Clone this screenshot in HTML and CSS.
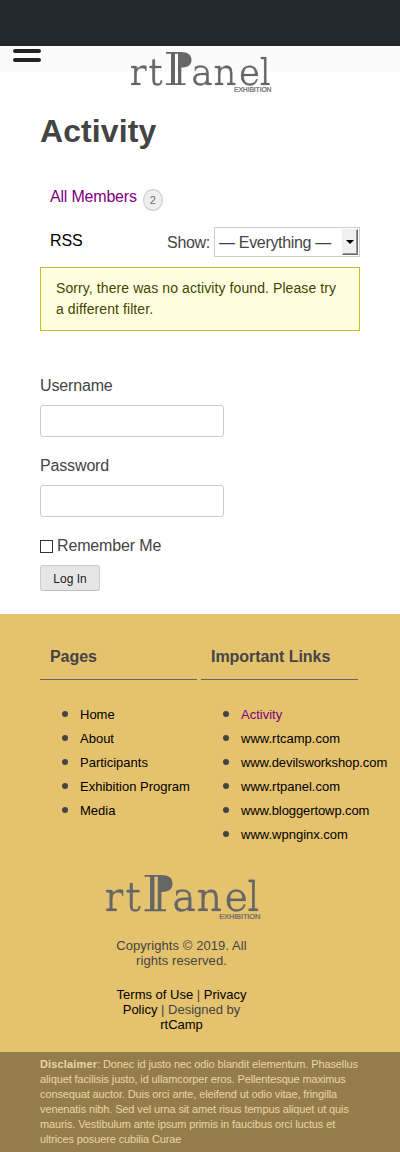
FILE: index.html
```html
<!DOCTYPE html>
<html lang="en">
<head>
<meta charset="utf-8">
<title>Activity | rtPanel Exhibition</title>
<link rel="stylesheet" href="styles.css">
</head>
<body>
<div class="adminbar"></div>
<header class="header">
  <svg class="menu" viewBox="0 0 28 14"><path d="M2 2H26M2 11H26"/></svg>
  <svg class="logo" viewBox="0 0 142 41">
    <defs>
      <mask id="thin" maskUnits="userSpaceOnUse" x="-4" y="-2" width="150" height="46">
        <text class="thin" x="0 18.800 61.700 83.700 109.200 129.900" y="32.700">rtanel</text>
      </mask>
    </defs>
    <text class="word" mask="url(#thin)" x="-1.400 17.400 60.300 82.300 107.800 128.500" y="32.700">rtanel</text>
    <path class="mark" d="M36 0H51C58 0 61.5 3 61.5 8S58 15.500 51.300 15.500V31.300H55.500V33H36V31.300H41V1.700H36ZM45 1.700V31.300H48V1.700Z" fill-rule="evenodd"/>
    <text class="sub" x="104" y="40.300" textLength="37.500">EXHIBITION</text>
  </svg>
</header>
<main class="main">
  <h1>Activity</h1>
  <div class="tabs"><a class="visited" href="#">All Members</a><span class="count">2</span></div>
  <div class="filter">
    <a href="#">RSS</a>
    <span class="show">Show:</span>
    <div class="select"><span>— Everything —</span><i class="arrow"></i></div>
  </div>
  <div class="notice">Sorry, there was no activity found. Please try<br>a different filter.</div>
  <form class="login">
    <label>Username</label><input class="field" type="text">
    <label>Password</label><input class="field" type="password">
    <div class="remember"><i class="check"></i><span>Remember Me</span></div>
    <button type="button">Log In</button>
  </form>
</main>
<footer class="footer">
  <div class="widgets">
    <section><h2>Pages</h2>
      <ul><li><a href="#">Home</a></li><li><a href="#">About</a></li><li><a href="#">Participants</a></li><li><a href="#">Exhibition Program</a></li><li><a href="#">Media</a></li></ul>
    </section>
    <section><h2>Important Links</h2>
      <ul><li><a class="visited" href="#">Activity</a></li><li><a href="#">www.rtcamp.com</a></li><li><a class="tight" href="#">www.devilsworkshop.com</a></li><li><a href="#">www.rtpanel.com</a></li><li><a class="tight" href="#">www.bloggertowp.com</a></li><li><a href="#">www.wpnginx.com</a></li></ul>
    </section>
  </div>
  <svg class="logo logo-footer" viewBox="0 0 142 41">
    <text class="word" mask="url(#thin)" x="-1.400 17.400 60.300 82.300 107.800 128.500" y="32.700">rtanel</text>
    <path class="mark" d="M36 0H51C58 0 61.5 3 61.5 8S58 15.500 51.300 15.500V31.300H55.500V33H36V31.300H41V1.700H36ZM45 1.700V31.300H48V1.700Z" fill-rule="evenodd"/>
    <text class="sub" x="104" y="40.300" textLength="37.500">EXHIBITION</text>
  </svg>
  <p class="copy">Copyrights © 2019. All<br>rights reserved.</p>
  <p class="copy terms"><a href="#">Terms of Use</a> | <a href="#">Privacy<br>Policy</a> | Designed by<br><a href="#">rtCamp</a></p>
</footer>
<div class="disclaimer"><b>Disclaimer</b>: Donec id justo nec odio blandit elementum. Phasellus<br>aliquet facilisis justo, id ullamcorper eros. Pellentesque maximus<br>consequat auctor. Duis orci ante, eleifend ut odio vitae, fringilla<br>venenatis nibh. Sed vel urna sit amet risus tempus aliquet ut quis<br>mauris. Vestibulum ante ipsum primis in faucibus orci luctus et<br>ultrices posuere cubilia Curae</div>
</body>
</html>
```
FILE: styles.css
```css
* { box-sizing: border-box; }
body { margin: 0; background: #fff; color: #444; font: 16px/24px "Liberation Sans", Arial, sans-serif; white-space: nowrap; }
a { color: #000; text-decoration: none; }
a.visited { color: #800080; }
h1, h2, p, ul { margin: 0; padding: 0; }
.adminbar { height: 46px; background: #23282d; }
.header { height: 26px; background: #fbfbfb; display: flex; align-items: flex-start; }
.menu { width: 28px; height: 14px; margin: 3px 0 0 13px; fill: none; stroke: #222; stroke-width: 4; stroke-linecap: round; }
.logo { display: block; width: 142px; height: 41px; margin: 6px 0 0 89px; overflow: visible; }
.word { font: 37px "DejaVu Serif", serif; fill: #666; stroke: #666; stroke-width: .6; }
.thin { font: 37px "DejaVu Serif", serif; fill: #fff; stroke: #fff; stroke-width: .6; }
.mark { fill: #666; }
.sub { font: 6.800px "Liberation Sans", Arial, sans-serif; fill: #666; stroke: #666; stroke-width: .2; }
.main { height: 542px; padding: 35px 40px 0; }
h1 { font-size: 32px; line-height: 48px; letter-spacing: .1px; }
.tabs { display: flex; height: 44px; margin-top: 30px; padding-left: 10px; letter-spacing: -.2px; }
.count { width: 20px; height: 22px; margin: 4px 0 0 6px; border: 1px solid #ccc; border-radius: 50%; background: #eee; color: #6c6c6c; font-size: 11px; line-height: 21px; text-align: center; }
.filter { display: flex; height: 38px; padding-left: 10px; letter-spacing: -.1px; }
.show { margin: 2px 4px 0 auto; letter-spacing: -.3px; }
.select { display: flex; width: 146px; height: 30px; margin-top: -2px; border: 1px solid #ccc; padding: 1px 1px 1px 4px; justify-content: space-between; line-height: 27px; letter-spacing: -.32px; }
.arrow { display: flex; width: 16px; height: 26px; border: 1px solid; border-color: #eee #666 #666 #eee; box-shadow: inset -1px -1px #999; background: #f0f0f0; align-items: center; justify-content: center; }
.arrow::before { content: ""; border: 4px solid transparent; border-top-color: #000; border-bottom: 0; }
.notice { height: 64px; padding: 10px 15px; border: 1px solid #cb2; background: #ffffdf; color: #440; font-size: 14px; line-height: 21px; letter-spacing: .09px; }
.login { display: flex; flex-direction: column; align-items: flex-start; margin-top: 43px; letter-spacing: -.15px; }
.field { width: 184px; height: 32px; margin: 7px 0 17px; border: 1px solid #ccc; border-radius: 3px; background: #fff; }
.remember { display: flex; align-items: center; gap: 4px; }
.check { width: 13px; height: 13px; margin-top: 1px; border: 1px solid #333; }
button { width: 60px; height: 26px; margin-top: 7px; padding: 1px 0 0; border: 1px solid #ccc; border-bottom-color: #bbb; border-radius: 3px; background: #e6e6e6; color: #222; font: 12px "Liberation Sans", Arial, sans-serif; }
.footer { height: 438px; background: #e5c26e; overflow: hidden; }
.widgets { display: flex; gap: 4px; height: 261px; padding: 30px 0 0 40px; }
.widgets section { width: 157px; }
h2 { height: 36px; padding-left: 10px; border-bottom: 1px solid #666; font-size: 16px; line-height: 25px; letter-spacing: -.05px; }
ul { padding: 23px 0 0 40px; font-size: 13px; list-style: none; }
li { display: flex; height: 24px; }
li::before { content: ""; flex: none; width: 6px; height: 6px; margin: 8px 12px 0 -18px; border-radius: 50%; background: #444; }
.tight { letter-spacing: -.09px; }
.logo-footer { width: 158px; height: 45px; margin: 0 0 0 104px; }
.copy { width: 157px; margin: 18px 0 0 103px; font-size: 13px; line-height: 15px; letter-spacing: .08px; text-align: center; }
.terms { margin-top: 19px; letter-spacing: 0; }
.disclaimer { height: 100px; padding: 5px 40px 0; background: #947d4b; color: #e9d6a3; font-size: 11px; line-height: 15px; letter-spacing: -.12px; }
.disclaimer b { letter-spacing: .15px; }
```
